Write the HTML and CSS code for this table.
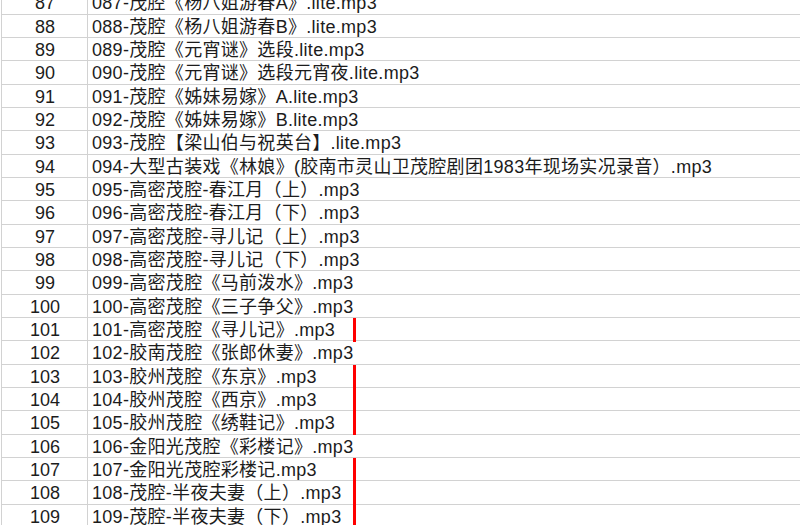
FILE: index.html
```html
<!DOCTYPE html>
<html lang="zh-CN">
<head>
<meta charset="utf-8">
<title>茂腔列表</title>
<link rel="stylesheet" href="styles.css">
</head>
<body>
<div class="sheet">
  <div class="row"><div class="num">87</div><div class="name">087-茂腔《杨八姐游春A》.lite.mp3</div><div class="next"></div></div>
  <div class="row"><div class="num">88</div><div class="name">088-茂腔《杨八姐游春B》.lite.mp3</div><div class="next"></div></div>
  <div class="row"><div class="num">89</div><div class="name">089-茂腔《元宵谜》选段.lite.mp3</div><div class="next"></div></div>
  <div class="row"><div class="num">90</div><div class="name">090-茂腔《元宵谜》选段元宵夜.lite.mp3</div><div class="next"></div></div>
  <div class="row"><div class="num">91</div><div class="name">091-茂腔《姊妹易嫁》A.lite.mp3</div><div class="next"></div></div>
  <div class="row"><div class="num">92</div><div class="name">092-茂腔《姊妹易嫁》B.lite.mp3</div><div class="next"></div></div>
  <div class="row"><div class="num">93</div><div class="name">093-茂腔【梁山伯与祝英台】.lite.mp3</div><div class="next"></div></div>
  <div class="row"><div class="num">94</div><div class="name">094-大型古装戏《林娘》(胶南市灵山卫茂腔剧团1983年现场实况录音）.mp3</div><div class="next"></div></div>
  <div class="row"><div class="num">95</div><div class="name">095-高密茂腔-春江月（上）.mp3</div><div class="next"></div></div>
  <div class="row"><div class="num">96</div><div class="name">096-高密茂腔-春江月（下）.mp3</div><div class="next"></div></div>
  <div class="row"><div class="num">97</div><div class="name">097-高密茂腔-寻儿记（上）.mp3</div><div class="next"></div></div>
  <div class="row"><div class="num">98</div><div class="name">098-高密茂腔-寻儿记（下）.mp3</div><div class="next"></div></div>
  <div class="row"><div class="num">99</div><div class="name">099-高密茂腔《马前泼水》.mp3</div><div class="next"></div></div>
  <div class="row"><div class="num">100</div><div class="name">100-高密茂腔《三子争父》.mp3</div><div class="next"></div></div>
  <div class="row"><div class="num">101</div><div class="name">101-高密茂腔《寻儿记》.mp3</div><div class="next mark"></div></div>
  <div class="row"><div class="num">102</div><div class="name">102-胶南茂腔《张郎休妻》.mp3</div><div class="next"></div></div>
  <div class="row"><div class="num">103</div><div class="name">103-胶州茂腔《东京》.mp3</div><div class="next mark"></div></div>
  <div class="row"><div class="num">104</div><div class="name">104-胶州茂腔《西京》.mp3</div><div class="next mark"></div></div>
  <div class="row"><div class="num">105</div><div class="name">105-胶州茂腔《绣鞋记》.mp3</div><div class="next mark"></div></div>
  <div class="row"><div class="num">106</div><div class="name">106-金阳光茂腔《彩楼记》.mp3</div><div class="next"></div></div>
  <div class="row"><div class="num">107</div><div class="name">107-金阳光茂腔彩楼记.mp3</div><div class="next mark"></div></div>
  <div class="row"><div class="num">108</div><div class="name">108-茂腔-半夜夫妻（上）.mp3</div><div class="next mark"></div></div>
  <div class="row"><div class="num">109</div><div class="name">109-茂腔-半夜夫妻（下）.mp3</div><div class="next mark"></div></div>
</div>
</body>
</html>
```

FILE: styles.css
```css
html, body {
  margin: 0;
  padding: 0;
  background: #ffffff;
  overflow: hidden;
}

body {
  font-family: "Liberation Sans", "Noto Sans CJK SC", sans-serif;
  font-size: 18px;
  color: #1c1c1c;
}

.sheet {
  margin-top: -8.7px;
  border-left: 1px solid #d2d2d2;
  margin-left: 1px;
}

.row {
  display: grid;
  grid-template-columns: 86px 266px 1fr;
  height: 23.333px;
  box-sizing: border-box;
  border-bottom: 1px solid #d2d2d2;
  line-height: 22px;
}

.num {
  border-right: 1px solid #d2d2d2;
  text-align: center;
  padding-top: 1px;
  padding-left: 1px;
}

.name {
  padding-left: 4px;
  padding-top: 1px;
  letter-spacing: 0.3px;
  white-space: nowrap;
  overflow: visible;
  position: relative;
  z-index: 1;
}

.next {
  position: relative;
}

.mark {
  border-left: 3px solid #ff0000;
  margin-left: -1px;
  margin-bottom: -1px;
  z-index: 2;
}
```
